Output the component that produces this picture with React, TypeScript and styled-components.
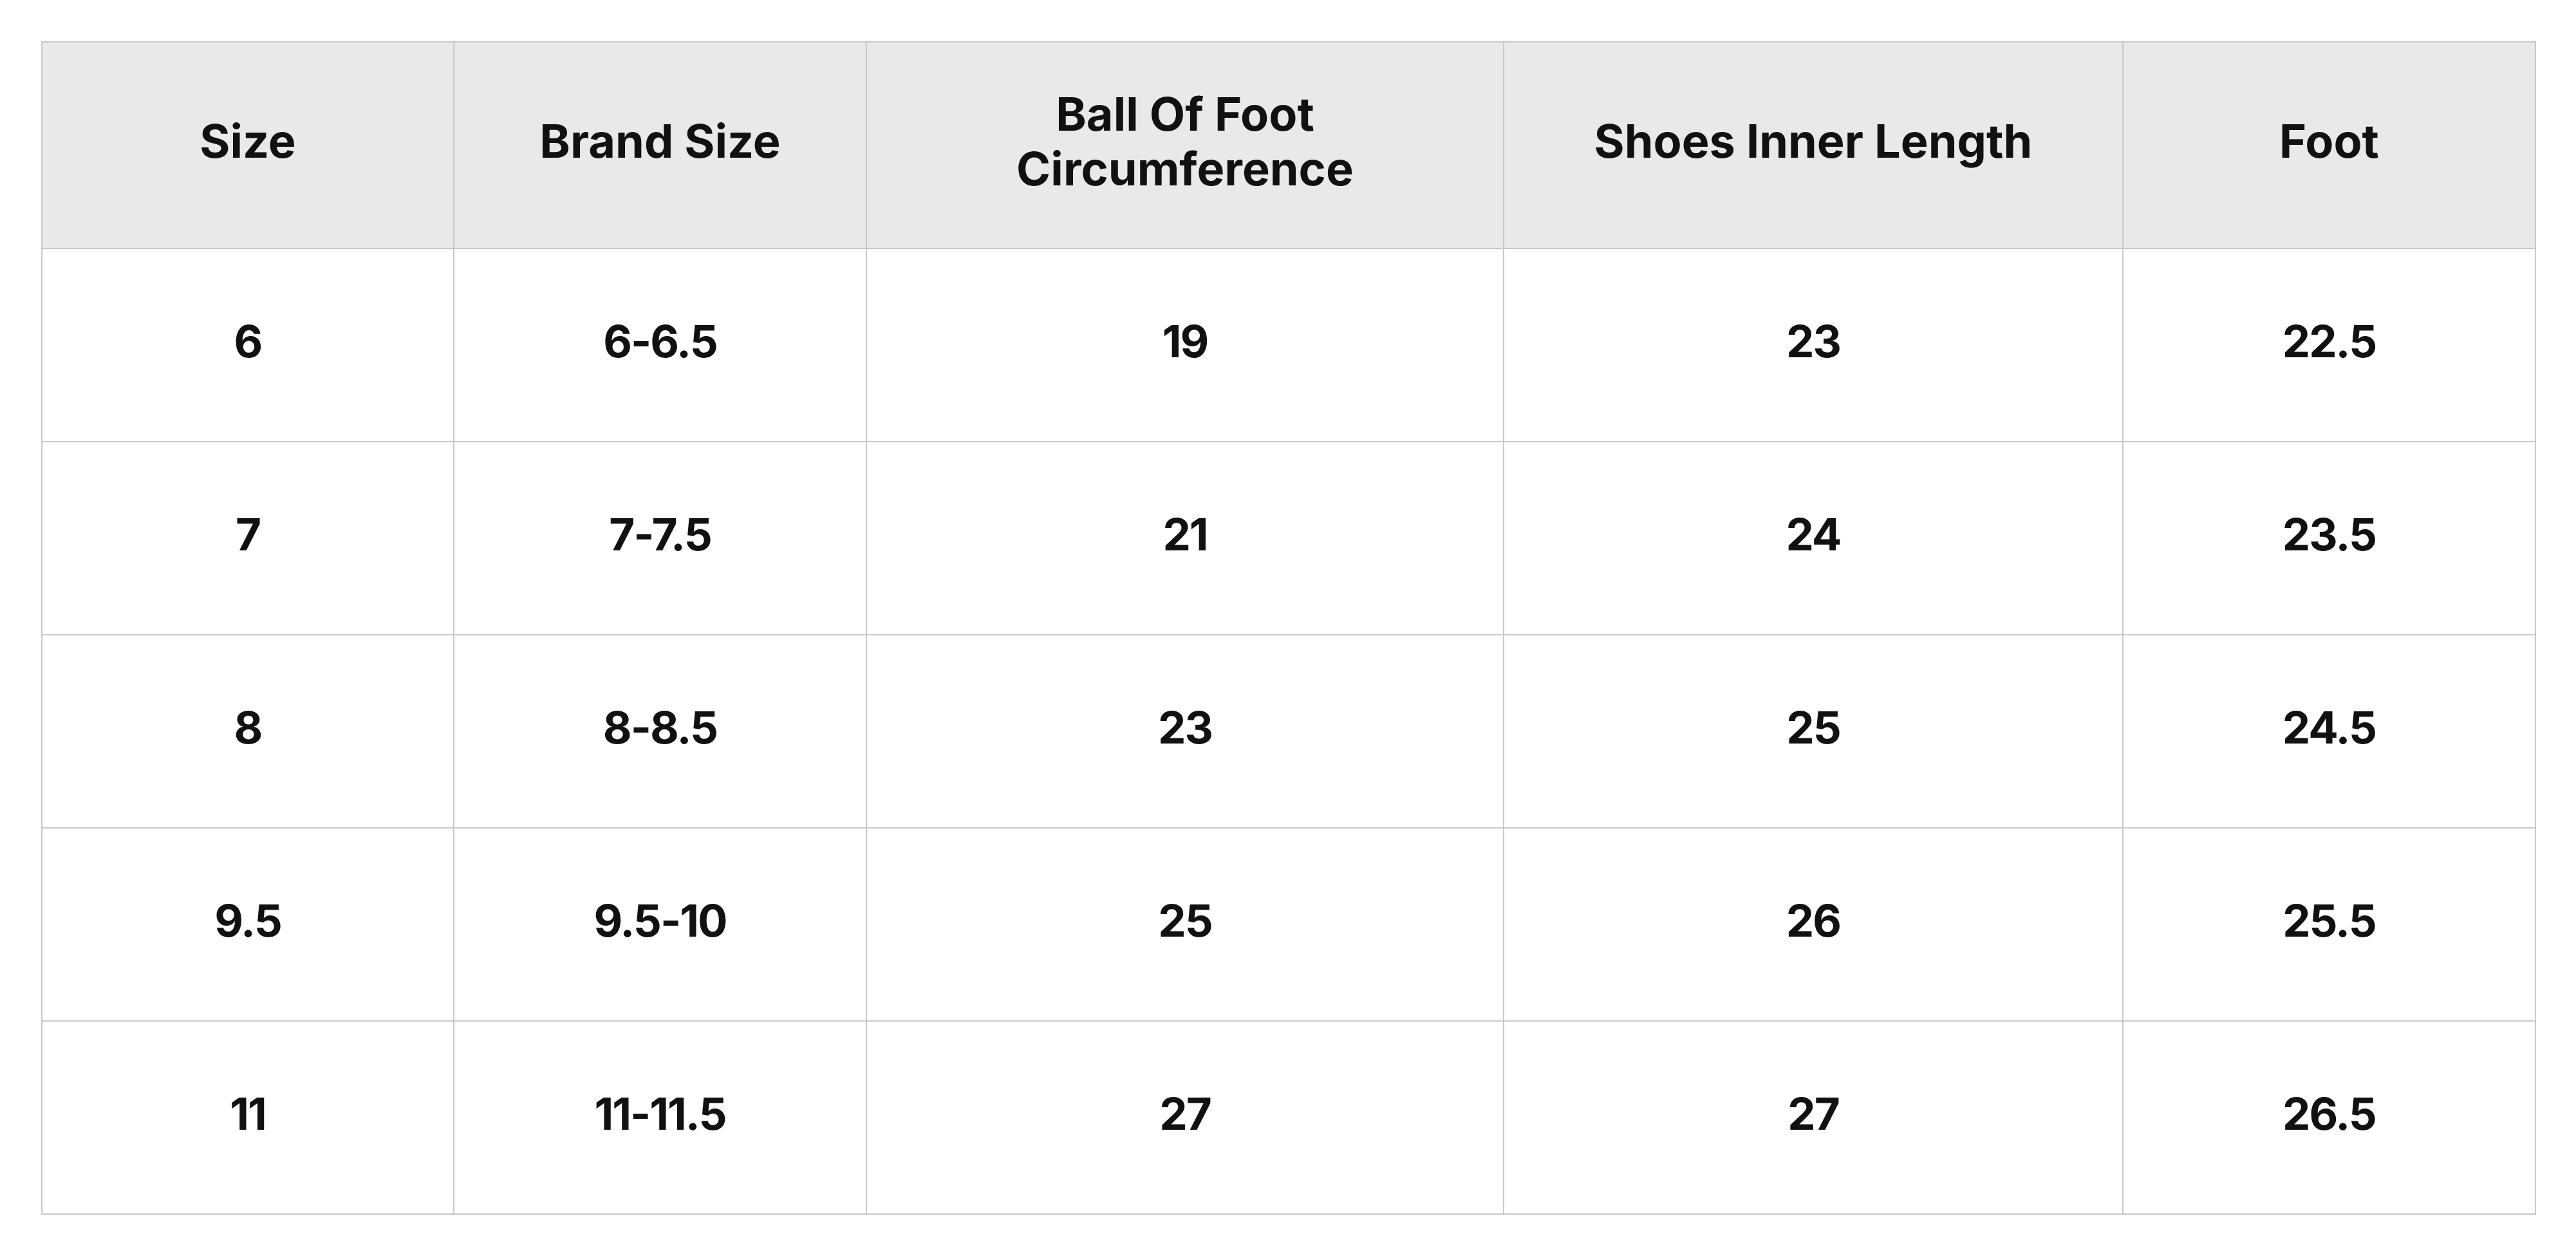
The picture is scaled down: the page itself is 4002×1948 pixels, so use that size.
import React from "react";
import styled, { createGlobalStyle } from "styled-components";

const GlobalStyle = createGlobalStyle`
  html, body {
    margin: 0;
    padding: 0;
    background: #ffffff;
  }
  body {
    font-family: Inter, "Noto Sans", "Liberation Sans", sans-serif;
    color: #111111;
  }
`;

const Page = styled.div`
  padding: 64px;
  box-sizing: border-box;
  width: 4002px;
`;

const Table = styled.table`
  width: 100%;
  border-collapse: collapse;
  table-layout: fixed;
  border: 2px solid #c8c8c8;
`;

const Col = styled.col<{ $w: number }>`
  width: ${(p) => p.$w}px;
`;

const HeadRow = styled.tr`
  height: 321px;
  background: #e9e9e9;
`;

const BodyRow = styled.tr`
  height: 300px;
  background: #ffffff;
`;

const HeadCell = styled.th`
  border: 2px solid #c8c8c8;
  padding: 0 80px 12px;
  font-size: 72px;
  font-weight: 700;
  line-height: 1.18;
  text-align: center;
  vertical-align: middle;
`;

const Cell = styled.td`
  border: 2px solid #c8c8c8;
  padding: 0 40px 12px;
  font-size: 69px;
  font-weight: 700;
  line-height: 1.2;
  letter-spacing: -2px;
  text-align: center;
  vertical-align: middle;
`;

const headers = [
  "Size",
  "Brand Size",
  "Ball Of Foot Circumference",
  "Shoes Inner Length",
  "Foot",
];

const widths = [640, 641, 990, 962, 641];

const rows = [
  ["6", "6-6.5", "19", "23", "22.5"],
  ["7", "7-7.5", "21", "24", "23.5"],
  ["8", "8-8.5", "23", "25", "24.5"],
  ["9.5", "9.5-10", "25", "26", "25.5"],
  ["11", "11-11.5", "27", "27", "26.5"],
];

export default function App() {
  return (
    <>
      <GlobalStyle />
      <Page>
        <Table>
          <colgroup>
            {widths.map((w, i) => (
              <Col key={i} $w={w} />
            ))}
          </colgroup>
          <thead>
            <HeadRow>
              {headers.map((h) => (
                <HeadCell key={h}>{h}</HeadCell>
              ))}
            </HeadRow>
          </thead>
          <tbody>
            {rows.map((r, i) => (
              <BodyRow key={i}>
                {r.map((c, j) => (
                  <Cell key={j}>{c}</Cell>
                ))}
              </BodyRow>
            ))}
          </tbody>
        </Table>
      </Page>
    </>
  );
}
